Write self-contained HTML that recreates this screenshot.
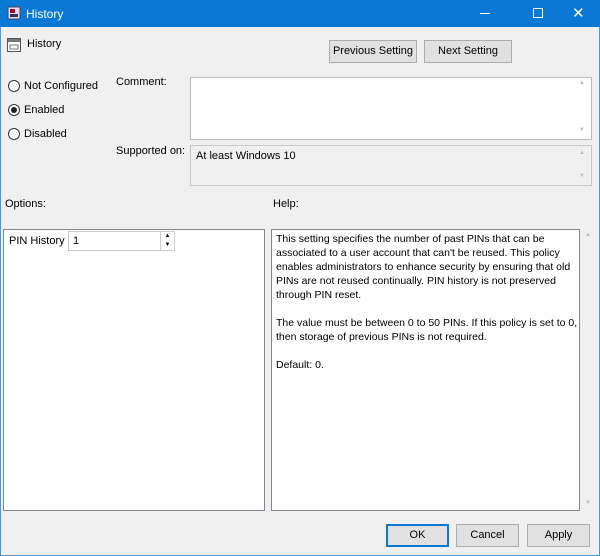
<!DOCTYPE html>
<html><head><style>
*{margin:0;padding:0;box-sizing:border-box}
body{width:600px;height:556px;overflow:hidden;background:#f0f0f0;font-family:"Liberation Sans",sans-serif;font-size:11px;color:#000;position:relative}
.a{position:absolute}
.title{left:0;top:0;width:600px;height:27px;background:#0a78d4;color:#fff}
.btn{position:absolute;background:#e1e1e1;border:1px solid #adadad;text-align:center;line-height:21px;font-size:11px}
.rad{position:absolute;width:12px;height:12px;border:1px solid #333;border-radius:50%;background:#fff}
.box{position:absolute;background:#fff;border:1px solid #828790}
.help p{margin-bottom:14px}
.sa{position:absolute;font-size:6px;color:#bbb}
</style></head><body>
<div class="a" style="left:0;top:0;width:1px;height:556px;background:#4a9ae0"></div>
<div class="a" style="right:0;top:0;width:1px;height:556px;background:#4a9ae0"></div>
<div class="a" style="left:0;bottom:0;width:600px;height:1px;background:#4a9ae0"></div>
<div class="a title">
 <svg class="a" style="left:7px;top:6px" width="14" height="14"><rect x="1" y="1" width="12" height="12" fill="#dde" stroke="#446"/><rect x="3" y="3" width="5" height="4" fill="#a02"/><rect x="3" y="8" width="8" height="3" fill="#335"/></svg>
 <div class="a" style="left:26px;top:7px;font-size:12px">History</div>
 <div class="a" style="left:480px;top:13px;width:10px;height:1px;background:#fff"></div>
 <div class="a" style="left:533px;top:8px;width:10px;height:10px;border:1px solid #fff"></div>
 <div class="a" style="left:572px;top:4px;font-size:15px">✕</div>
</div>
<svg class="a" style="left:6px;top:37px" width="16" height="16"><rect x="1.5" y="1.5" width="13" height="13" fill="#fff" stroke="#555"/><rect x="2" y="2" width="12" height="3" fill="#777"/><rect x="4" y="8" width="8" height="4" fill="none" stroke="#777"/></svg>
<div class="a" style="left:27px;top:38px">History</div>
<div class="btn" style="left:329px;top:40px;width:88px;height:23px">Previous Setting</div>
<div class="btn" style="left:424px;top:40px;width:88px;height:23px">Next Setting</div>
<div class="rad" style="left:8px;top:80px"></div><div class="a" style="left:24px;top:80px">Not Configured</div>
<div class="rad" style="left:8px;top:104px"><div class="a" style="left:2px;top:2px;width:6px;height:6px;border-radius:50%;background:#222"></div></div><div class="a" style="left:24px;top:104px">Enabled</div>
<div class="rad" style="left:8px;top:128px"></div><div class="a" style="left:24px;top:128px">Disabled</div>
<div class="a" style="left:116px;top:76px">Comment:</div>
<div class="box" style="left:190px;top:77px;width:402px;height:63px;border-color:#bbb"></div>
<div class="sa" style="left:579px;top:80px">▲</div><div class="sa" style="left:579px;top:127px">▼</div>
<div class="a" style="left:116px;top:145px">Supported on:</div>
<div class="box" style="left:190px;top:145px;width:402px;height:41px;background:#f0f0f0;border-color:#c8c8c8"></div>
<div class="sa" style="left:579px;top:150px">▲</div><div class="sa" style="left:579px;top:173px">▼</div>
<div class="a" style="left:196px;top:150px">At least Windows 10</div>
<div class="a" style="left:5px;top:198px">Options:</div>
<div class="a" style="left:273px;top:198px">Help:</div>
<div class="box" style="left:3px;top:229px;width:262px;height:282px"></div>
<div class="a" style="left:9px;top:235px">PIN History</div>
<div class="box" style="left:68px;top:231px;width:107px;height:20px;border-color:#ccc"></div>
<div class="a" style="left:73px;top:235px">1</div>
<div class="a" style="left:160px;top:232px;width:14px;height:18px;border-left:1px solid #ccc;font-size:6px;text-align:center;line-height:9px">▲<br>▼</div>
<div class="box help" style="left:271px;top:229px;width:309px;height:282px;padding:2px 1px 2px 4px;line-height:14px;font-size:10.5px">
<p>This setting specifies the number of past PINs that can be associated to a user account that can't be reused. This policy enables administrators to enhance security by ensuring that old PINs are not reused continually. PIN history is not preserved through PIN reset.</p>
<p>The value must be between 0 to 50 PINs. If this policy is set to 0, then storage of previous PINs is not required.</p>
<p>Default: 0.</p>
</div>
<div class="sa" style="left:585px;top:232px">▲</div><div class="sa" style="left:585px;top:500px">▼</div>
<div class="btn" style="left:386px;top:524px;width:63px;height:23px;border:2px solid #0a78d4;line-height:19px">OK</div>
<div class="btn" style="left:456px;top:524px;width:63px;height:23px">Cancel</div>
<div class="btn" style="left:527px;top:524px;width:63px;height:23px">Apply</div>
</body></html>
